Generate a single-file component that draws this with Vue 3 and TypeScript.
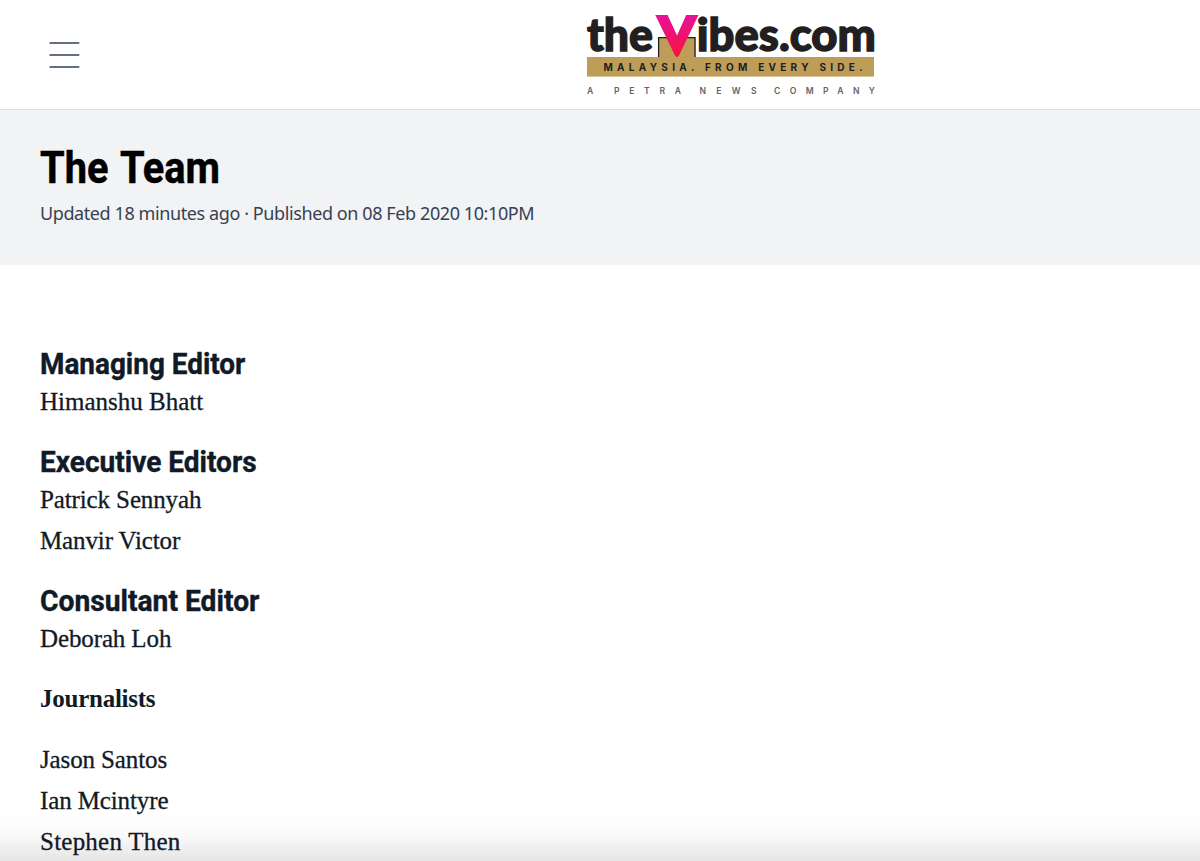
<script setup lang="ts">
interface Section {
  title: string
  id: string
  strong?: boolean
  people: string[]
}

const sections: Section[] = [
  { title: 'Managing Editor', id: 'managing', people: ['Himanshu Bhatt'] },
  { title: 'Executive Editors', id: 'executive', people: ['Patrick Sennyah', 'Manvir Victor'] },
  { title: 'Consultant Editor', id: 'consultant', people: ['Deborah Loh'] },
  { title: 'Journalists', id: 'journalists', strong: true, people: ['Jason Santos', 'Ian Mcintyre', 'Stephen Then'] },
]
</script>

<template>
  <div class="page">
    <header class="topbar">
      <button class="menu" aria-label="Menu">
        <svg width="31" height="28" viewBox="0 0 31 28">
          <path d="M0.5 2H30.3M0.5 14H30.3M0.5 26H30.3" stroke="#64717c" stroke-width="1.8" />
        </svg>
      </button>
      <svg class="logo" width="300" height="104" viewBox="581 0 300 104">
        <defs>
          <linearGradient id="vee" x1="0" y1="0" x2="0" y2="1">
            <stop offset="0" stop-color="#e8119b" />
            <stop offset="1" stop-color="#f5143c" />
          </linearGradient>
        </defs>
        <rect x="587" y="57" width="287" height="19.6" fill="#bd9d57" />
        <rect x="658" y="37" width="37.5" height="20.5" fill="#bd9d57" />
        <path d="M658.6 57V37.6H695V57" fill="none" stroke="#231f20" stroke-width="1.3" />
        <path d="M655.3 15H667.6L677 35.5L686.2 15H698.5L679 55.5Q677 58.5 675 55.5Z" fill="url(#vee)" />
        <g class="word">
          <text x="587" y="50.6" textLength="66" lengthAdjust="spacingAndGlyphs">the</text>
          <text x="696.8" y="50.6" textLength="179" lengthAdjust="spacingAndGlyphs">ibes.com</text>
        </g>
        <text class="tag" x="603.5" y="70.8" textLength="259" lengthAdjust="spacing">MALAYSIA. FROM EVERY SIDE.</text>
        <g class="company">
          <text x="587" y="94">A</text>
          <text x="614" y="94" textLength="67">PETRA</text>
          <text x="699.5" y="94" textLength="57">NEWS</text>
          <text x="774" y="94" textLength="101">COMPANY</text>
        </g>
      </svg>
    </header>

    <section class="hero">
      <h1>The Team</h1>
      <p>Updated 18 minutes ago · Published on 08 Feb 2020 10:10PM</p>
    </section>

    <main class="content">
      <section v-for="s in sections" :key="s.id" class="group" :class="s.id">
        <p v-if="s.strong" class="strong">{{ s.title }}</p>
        <h3 v-else>{{ s.title }}</h3>
        <ul>
          <li v-for="name in s.people" :key="name">{{ name }}</li>
        </ul>
      </section>
    </main>
    <div class="fade"></div>
  </div>
</template>

<style>
body {
  margin: 0;
  overflow: hidden;
}
</style>

<style scoped>
.page {
  position: relative;
  height: 861px;
  overflow: hidden;
  background: #fff;
  color: #111a27;
}
.topbar {
  box-sizing: border-box;
  height: 110px;
  display: flex;
  align-items: flex-start;
  border-bottom: 1px solid #dfe0e2;
  padding-left: 49px;
}
.menu {
  border: 0;
  padding: 0;
  margin-top: 41px;
  width: 31px;
  height: 28px;
  background: none;
}
.menu svg,
.logo {
  display: block;
}
.logo {
  margin-left: 501px;
}
.word {
  font: 900 45px Lato, sans-serif;
  fill: #231f20;
  stroke: #231f20;
  stroke-width: 1.4px;
}
.tag {
  font: 700 10px Inter, sans-serif;
  fill: #231f20;
}
.company {
  font: 600 8.6px Inter, sans-serif;
  fill: #636466;
}
.hero {
  box-sizing: border-box;
  height: 155px;
  padding: 33px 40px 0;
  background: #f2f3f5;
}
h1,
h3 {
  width: max-content;
  margin: 0;
  transform-origin: left;
}
h1 {
  font: 700 43.5px/52px Roboto, sans-serif;
  color: #000;
  word-spacing: 3px;
  -webkit-text-stroke: 0.5px #000;
  transform: scaleX(0.914);
}
.hero p {
  margin: 4px 0 0;
  font: 400 18px/28px "Noto Sans", sans-serif;
  letter-spacing: -0.405px;
  color: #374151;
}
.content {
  display: flex;
  flex-direction: column;
  gap: 22px;
  padding: 81px 40px 0;
}
h3 {
  font: 700 29px/36px Roboto, sans-serif;
  height: 35px;
  -webkit-text-stroke: 0.4px currentColor;
  transform: scaleX(0.967);
}
.managing h3 {
  transform: scaleX(0.962);
}
.consultant h3 {
  transform: scaleX(0.973);
}
ul {
  list-style: none;
  margin: 0;
  padding: 0;
}
li,
.strong {
  font: 400 25px/41px "Liberation Serif", serif;
  -webkit-text-stroke: 0.3px currentColor;
}
.executive li,
.consultant li,
.journalists li {
  letter-spacing: -0.12px;
}
.journalists li:last-child {
  letter-spacing: 0.23px;
}
.strong {
  margin: -3px 0 20px;
  font-weight: 700;
  letter-spacing: -0.25px;
  -webkit-text-stroke: 0;
}
.fade {
  position: absolute;
  left: 0;
  right: 0;
  bottom: 0;
  height: 46px;
  background: linear-gradient(rgba(0, 0, 0, 0), rgba(0, 0, 0, 0.025) 45%, rgba(0, 0, 0, 0.1));
}
</style>
